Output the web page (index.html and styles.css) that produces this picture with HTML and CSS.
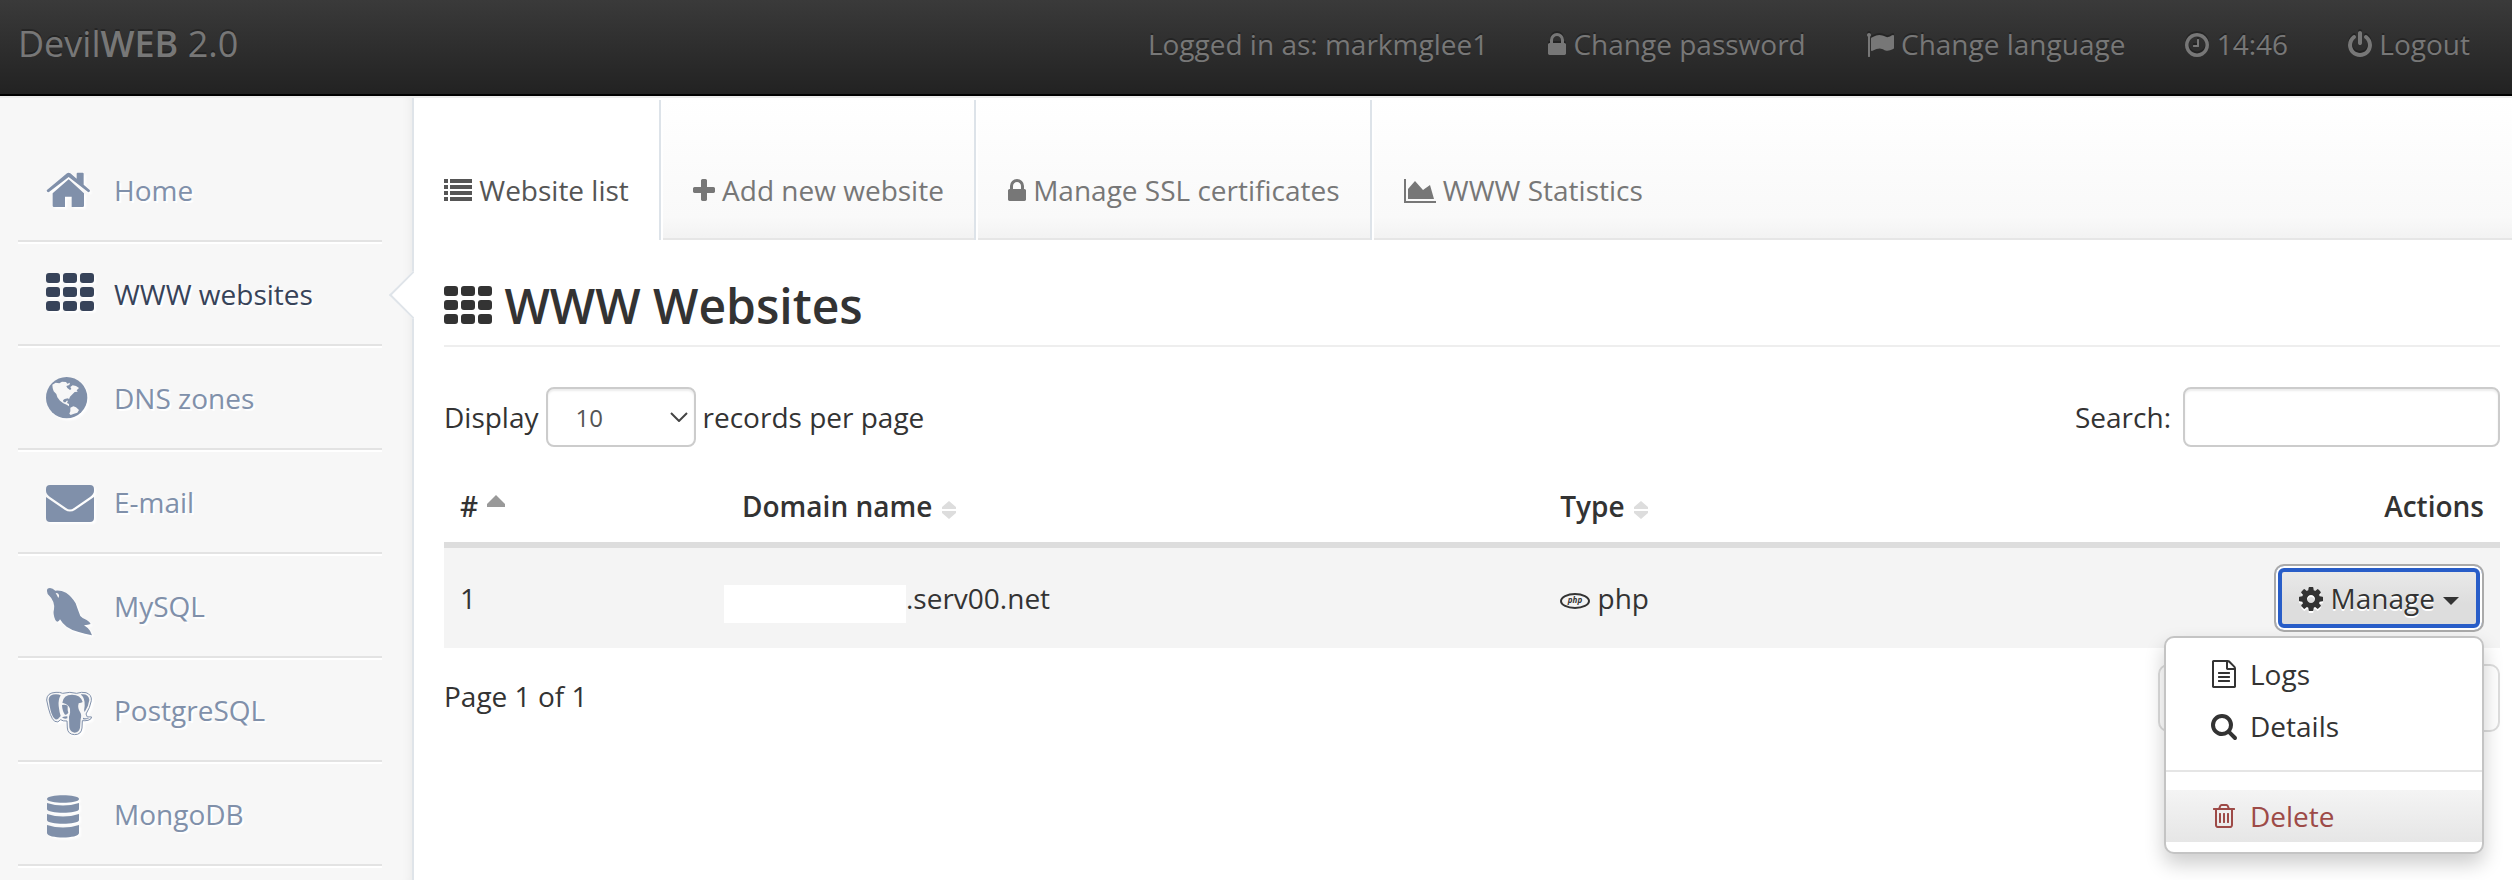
FILE: index.html
```html
<!DOCTYPE html>
<html lang="en">
<head>
    <meta charset="UTF-8">
    <meta name="viewport" content="width=device-width, initial-scale=1.0">
    <title>WWW Websites - DevilWEB</title>
    <link rel="stylesheet" href="styles.css">
</head>
<body>
    <header class="navbar">
        <a class="brand" href="#">Devil<strong>WEB</strong> 2.0</a>
        <ul class="navbar-menu">
            <li>Logged in as: markmglee1</li>
            <li><a href="#"><svg class="icon" viewBox="320 0 1152 1792"><path d="M640 768h512v-192q0-106-75-181t-181-75-181 75-75 181v192zm832 96v576q0 40-28 68t-68 28h-960q-40 0-68-28t-28-68v-576q0-40 28-68t68-28h32v-192q0-184 132-316t316-132 316 132 132 316v192h32q40 0 68 28t28 68z"/></svg> Change password</a></li>
            <li><a href="#"><svg class="icon" viewBox="0 0 1792 1792"><path d="M320 256q0 72-64 110v1266q0 13-9.500 22.500t-22.500 9.500h-64q-13 0-22.500-9.500t-9.500-22.500v-1266q-64-38-64-110 0-53 37.500-90.500t90.500-37.500 90.500 37.500 37.500 90.500zm1472 64v763q0 25-12.500 38.500t-39.500 27.500q-215 116-369 116-61 0-123.500-22t-108.500-48-115.500-48-142.500-22q-192 0-464 146-17 9-33 9-26 0-45-19t-19-45v-742q0-32 31-55 21-14 79-43 236-120 421-120 107 0 200 29t219 88q38 19 88 19 54 0 117.500-21t110-47 88-47 54.500-21q26 0 45 19t19 45z"/></svg> Change language</a></li>
            <li><a href="#"><svg class="icon" viewBox="128 0 1536 1792"><path d="M1024 544v448q0 14-9 23t-23 9h-320q-14 0-23-9t-9-23v-64q0-14 9-23t23-9h224v-352q0-14 9-23t23-9h64q14 0 23 9t9 23zm416 352q0-148-73-273t-198-198-273-73-273 73-198 198-73 273 73 273 198 198 273 73 273-73 198-198 73-273zm224 0q0 209-103 385.500t-279.500 279.500-385.500 103-385.500-103-279.500-279.500-103-385.500 103-385.500 279.500-279.500 385.500-103 385.500 103 279.500 279.500 103 385.500z"/></svg> 14:46</a></li>
            <li><a href="#"><svg class="icon" viewBox="128 0 1536 1792"><path d="M1664 896q0 156-61 298t-164 245-245 164-298 61-298-61-245-164-164-245-61-298q0-182 80.500-343t226.500-270q43-32 95.500-25t83.500 50q32 42 24.500 94.500t-49.500 84.500q-98 74-151.500 181t-53.500 228q0 104 40.500 198.500t109.500 163.500 163.500 109.500 198.500 40.500 198.500-40.500 163.500-109.500 109.500-163.500 40.500-198.500q0-121-53.500-228t-151.500-181q-42-32-49.500-84.500t24.500-94.500q31-43 84-50t95 25q146 109 226.500 270t80.500 343zm-640-768v640q0 52-38 90t-90 38-90-38-38-90v-640q0-52 38-90t90-38 90 38 38 90z"/></svg> Logout</a></li>
        </ul>
    </header>

    <div class="page">
        <nav class="sidebar">
            <ul>
                <li><a href="#">
                    <svg viewBox="18 18 144 144">
                        <path d="M20 91 81 40q5-4 10 0l19 16V41q0-3 3-3h15q3 0 3 3v33l19 17q0 6-5 6L86 51 26 97q-6 0-6-6z"/>
                        <path d="M38 100 86 58l46 42v37q0 4-4 4H95v-31H75v31H42q-4 0-4-4z"/>
                    </svg>
                    Home
                </a></li>
                <li class="active"><a href="#">
                    <svg viewBox="0 0 48 48">
                        <path d="M3 3h8a3 3 0 0 1 3 3v4a3 3 0 0 1-3 3h-8a3 3 0 0 1-3-3v-4a3 3 0 0 1 3-3zm17 0h8a3 3 0 0 1 3 3v4a3 3 0 0 1-3 3h-8a3 3 0 0 1-3-3v-4a3 3 0 0 1 3-3zm17 0h8a3 3 0 0 1 3 3v4a3 3 0 0 1-3 3h-8a3 3 0 0 1-3-3v-4a3 3 0 0 1 3-3zM3 17h8a3 3 0 0 1 3 3v4a3 3 0 0 1-3 3h-8a3 3 0 0 1-3-3v-4a3 3 0 0 1 3-3zm17 0h8a3 3 0 0 1 3 3v4a3 3 0 0 1-3 3h-8a3 3 0 0 1-3-3v-4a3 3 0 0 1 3-3zm17 0h8a3 3 0 0 1 3 3v4a3 3 0 0 1-3 3h-8a3 3 0 0 1-3-3v-4a3 3 0 0 1 3-3zM3 31h8a3 3 0 0 1 3 3v4a3 3 0 0 1-3 3h-8a3 3 0 0 1-3-3v-4a3 3 0 0 1 3-3zm17 0h8a3 3 0 0 1 3 3v4a3 3 0 0 1-3 3h-8a3 3 0 0 1-3-3v-4a3 3 0 0 1 3-3zm17 0h8a3 3 0 0 1 3 3v4a3 3 0 0 1-3 3h-8a3 3 0 0 1-3-3v-4a3 3 0 0 1 3-3z"/>
                    </svg>
                    WWW websites
                </a></li>
                <li><a href="#">
                    <svg viewBox="18 12 144 144">
                        <circle cx="80" cy="83" r="62"/>
                        <path class="land" d="M37 44L47 38 58 40 66 35 78 36 82 41 90 38 88 45 79 48 82 54 90 60 94 57 91 51 98 46 108 48 117 54 110 61 113 65 104 66 98 72 90 80 87 88 84 85 74 87 69 91 71 97 77 97 80 92 84 92 81 99 87 102 87 109 80 104 70 100 60 92 52 82 49 72 41 64 38 54z"/>
                        <path class="land" d="M91 113L100 109 108 112 117 120 112 128 102 131 92 135 88 131 91 124z"/>
                    </svg>
                    DNS zones
                </a></li>
                <li><a href="#">
                    <svg viewBox="0 0 48 48">
                        <path d="M4 7h40q4 0 4 4v2q0 3-4 6L28 30q-4 3-8 0L4 19q-4-3-4-6v-2q0-4 4-4z"/>
                        <path d="M0 19l19 13q5 3 10 0l19-13v21q0 4-4 4H4q-4 0-4-4z"/>
                    </svg>
                    E-mail
                </a></li>
                <li><a href="#">
                    <svg viewBox="18 6 144 144">
                        <path d="M21 34Q20 24 30 24 38 25 46 32 62 30 78 38 96 50 107 70 113 88 121 108 128 116 140 120 150 126 152 132 144 135 132 136 142 142 150 152L156 166Q134 162 116 156 94 150 80 140 68 132 60 118 58 122 55 124 51 128 46 120 38 102 42 88 44 78 40 66 34 52 23 42z"/>
                        <path class="land" d="M47 39q8-1 10 6 1 4-2 9-4-8-8-15z"/>
                    </svg>
                    MySQL
                </a></li>
                <li><a href="#">
                    <svg viewBox="18 318 144 144">
                        <path class="outline" d="M20 360Q20 338 48 337 60 336 68 340 90 334 110 340 125 335 138 338 156 344 154 362 150 384 138 402L142 411Q150 410 155 411 154 419 144 421 134 423 127 422L126 444Q124 464 104 464 83 463 82 444L81 423Q68 424 62 419 54 430 44 424 30 414 20 360z"/>
                        <path d="M26 358Q28 343 48 343 57 343 62 346 54 360 56 378 58 396 62 408 54 420 46 418 32 410 26 358z"/>
                        <path d="M67 368Q70 344 96 344 122 344 128 366 124 368 116 370 112 384 120 396 126 404 122 418L120 444Q116 458 104 458 90 456 88 442L87 410Q92 398 90 386 86 372 67 368z"/>
                        <path d="M66 375Q76 373 83 377 82 390 85 398 80 406 75 404 67 394 66 375z"/>
                        <path d="M122 343Q146 340 148 360 146 378 134 396 131 390 134 378 136 356 122 343z"/>
                        <path d="M66 412Q74 409 82 409L82 415Q72 418 66 412zM129 413Q138 417 150 413 142 420 129 418z"/>
                    </svg>
                    PostgreSQL
                </a></li>
                <li><a href="#">
                    <svg viewBox="0 0 48 48">
                        <path d="M1 9c0-5 32-5 32 0s-32 5-32 0zM1 13q16 5 32 0v6c0 5-32 5-32 0zM1 24q16 5 32 0v6c0 5-32 5-32 0zM1 35q16 5 32 0v8c0 6-32 6-32 0z"/>
                    </svg>
                    MongoDB
                </a></li>
            </ul>
        </nav>

        <main class="main">
            <nav class="tabs">
                <a class="active" href="#"><svg class="icon" viewBox="0 0 28 28"><path d="M0 2h4v4H0zM6 2h22v4H6zM0 8h4v4H0zM6 8h22v4H6zM0 14h4v4H0zM6 14h22v4H6zM0 20h4v4H0zM6 20h22v4H6z"/></svg> Website list</a>
                <a href="#"><svg class="icon" viewBox="192 0 1408 1792"><path d="M1600 736v192q0 40-28 68t-68 28h-416v416q0 40-28 68t-68 28h-192q-40 0-68-28t-28-68v-416h-416q-40 0-68-28t-28-68v-192q0-40 28-68t68-28h416v-416q0-40 28-68t68-28h192q40 0 68 28t28 68v416h416q40 0 68 28t28 68z"/></svg> Add new website</a>
                <a href="#"><svg class="icon" viewBox="320 0 1152 1792"><path d="M640 768h512v-192q0-106-75-181t-181-75-181 75-75 181v192zm832 96v576q0 40-28 68t-68 28h-960q-40 0-68-28t-28-68v-576q0-40 28-68t68-28h32v-192q0-184 132-316t316-132 316 132 132 316v192h32q40 0 68 28t28 68z"/></svg> Manage SSL certificates</a>
                <a href="#"><svg class="icon" viewBox="0 0 32 28"><path d="M0 2h2v22h30v2H0zM4 22V12l7-8 8 9 7-5 4 14z"/></svg> WWW Statistics</a>
            </nav>

            <div class="content">
                <h1>
                    <svg class="icon-heading" viewBox="0 0 48 38">
                        <path d="M3 0h8a3 3 0 0 1 3 3v4a3 3 0 0 1-3 3h-8a3 3 0 0 1-3-3v-4a3 3 0 0 1 3-3zm17 0h8a3 3 0 0 1 3 3v4a3 3 0 0 1-3 3h-8a3 3 0 0 1-3-3v-4a3 3 0 0 1 3-3zm17 0h8a3 3 0 0 1 3 3v4a3 3 0 0 1-3 3h-8a3 3 0 0 1-3-3v-4a3 3 0 0 1 3-3zM3 14h8a3 3 0 0 1 3 3v4a3 3 0 0 1-3 3h-8a3 3 0 0 1-3-3v-4a3 3 0 0 1 3-3zm17 0h8a3 3 0 0 1 3 3v4a3 3 0 0 1-3 3h-8a3 3 0 0 1-3-3v-4a3 3 0 0 1 3-3zm17 0h8a3 3 0 0 1 3 3v4a3 3 0 0 1-3 3h-8a3 3 0 0 1-3-3v-4a3 3 0 0 1 3-3zM3 28h8a3 3 0 0 1 3 3v4a3 3 0 0 1-3 3h-8a3 3 0 0 1-3-3v-4a3 3 0 0 1 3-3zm17 0h8a3 3 0 0 1 3 3v4a3 3 0 0 1-3 3h-8a3 3 0 0 1-3-3v-4a3 3 0 0 1 3-3zm17 0h8a3 3 0 0 1 3 3v4a3 3 0 0 1-3 3h-8a3 3 0 0 1-3-3v-4a3 3 0 0 1 3-3z"/>
                    </svg>
                    WWW Websites
                </h1>

                <div class="table-controls">
                    <label class="length">
                        Display
                        <span class="select">
                            <select>
                                <option>10</option>
                                <option>25</option>
                                <option>50</option>
                            </select>
                            <svg viewBox="0 0 18 10"><path d="M1 1l8 8 8-8"/></svg>
                        </span>
                        records per page
                    </label>
                    <label class="search">Search: <input type="text"></label>
                </div>

                <table>
                    <thead>
                        <tr>
                            <th class="col-id"># <svg class="sort-asc" viewBox="0 0 18 12"><path d="M9 0l9 9v3H0V9z"/></svg></th>
                            <th class="col-domain">Domain name <svg class="sort" viewBox="0 0 14 18"><path d="M7 0l7 6v2H0V6zM0 10h14v2l-7 6-7-6z"/></svg></th>
                            <th>Type <svg class="sort" viewBox="0 0 14 18"><path d="M7 0l7 6v2H0V6zM0 10h14v2l-7 6-7-6z"/></svg></th>
                            <th class="actions">Actions</th>
                        </tr>
                    </thead>
                    <tbody>
                        <tr>
                            <td>1</td>
                            <td><span class="hidden-name"></span>.serv00.net</td>
                            <td>
                                <svg class="icon-php" viewBox="0 0 30 16">
                                    <ellipse cx="15" cy="8" rx="14" ry="7"/>
                                    <text x="15" y="10" text-anchor="middle">php</text>
                                </svg>
                                php
                            </td>
                            <td class="actions">
                                <div class="dropdown">
                                    <button class="btn" type="button"><svg class="icon" viewBox="128 0 1536 1792"><path d="M1152 896q0-106-75-181t-181-75-181 75-75 181 75 181 181 75 181-75 75-181zm512-109v222q0 12-8 23t-20 13l-185 28q-19 54-39 91 35 50 107 138 10 12 10 25t-9 23q-27 37-99 108t-94 71q-12 0-26-9l-138-108q-44 23-91 38-16 136-29 186-7 28-36 28h-222q-14 0-24.500-8.500t-11.500-21.500l-28-184q-49-16-90-37l-141 107q-10 9-25 9-14 0-25-11-126-114-165-168-7-10-7-23 0-12 8-23 15-21 51-66.500t54-70.500q-27-50-41-99l-183-27q-13-2-21-12.500t-8-23.500v-222q0-12 8-23t19-13l186-28q14-46 39-92-40-57-107-138-10-12-10-24 0-10 9-23 26-36 98.500-107.500t94.500-71.500q13 0 26 10l138 107q44-23 91-38 16-136 29-186 7-28 36-28h222q14 0 24.500 8.500t11.500 21.500l28 184q49 16 90 37l142-107q9-9 24-9 13 0 25 10 129 119 165 170 7 8 7 22 0 12-8 23-15 21-51 66.500t-54 70.500q26 50 41 98l183 28q13 2 21 12.500t8 23.500z"/></svg> Manage<span class="caret"></span></button>
                                    <ul class="dropdown-menu">
                                        <li><a href="#"><svg class="icon" viewBox="128 0 1536 1792"><path d="M1596 380q28 28 48 76t20 88v1152q0 40-28 68t-68 28h-1344q-40 0-68-28t-28-68v-1600q0-40 28-68t68-28h896q40 0 88 20t76 48zm-444-244v376h376q-10-29-22-41l-313-313q-12-12-41-22zm384 1528v-1024h-416q-40 0-68-28t-28-68v-416h-768v1536h1280zm-1024-864q0-14 9-23t23-9h704q14 0 23 9t9 23v64q0 14-9 23t-23 9h-704q-14 0-23-9t-9-23v-64zm736 224q14 0 23 9t9 23v64q0 14-9 23t-23 9h-704q-14 0-23-9t-9-23v-64q0-14 9-23t23-9h704zm0 256q14 0 23 9t9 23v64q0 14-9 23t-23 9h-704q-14 0-23-9t-9-23v-64q0-14 9-23t23-9h704z"/></svg> Logs</a></li>
                                        <li><a href="#"><svg class="icon" viewBox="64 0 1664 1792"><path d="M1216 832q0-185-131.500-316.500t-316.500-131.500-316.500 131.500-131.500 316.500 131.500 316.500 316.500 131.500 316.500-131.500 131.500-316.500zm512 832q0 52-38 90t-90 38q-54 0-90-38l-343-342q-179 124-399 124-143 0-273.500-55.500t-225-150-150-225-55.500-273.500 55.500-273.500 150-225 225-150 273.500-55.500 273.500 55.500 225 150 150 225 55.500 273.500q0 220-124 399l343 343q37 37 37 90z"/></svg> Details</a></li>
                                        <li class="divider"></li>
                                        <li class="delete"><a href="#"><svg class="icon" viewBox="192 0 1408 1792"><path d="M704 736v576q0 14-9 23t-23 9h-64q-14 0-23-9t-9-23v-576q0-14 9-23t23-9h64q14 0 23 9t9 23zm256 0v576q0 14-9 23t-23 9h-64q-14 0-23-9t-9-23v-576q0-14 9-23t23-9h64q14 0 23 9t9 23zm256 0v576q0 14-9 23t-23 9h-64q-14 0-23-9t-9-23v-576q0-14 9-23t23-9h64q14 0 23 9t9 23zm128 724v-948h-896v948q0 22 7 40.500t14.500 27 10.500 8.500h832q3 0 10.500-8.500t14.500-27 7-40.500zm-672-1076h448l-48-117q-7-9-17-11h-317q-10 2-17 11zm928 32v64q0 14-9 23t-23 9h-96v948q0 83-47 143.500t-113 60.500h-832q-66 0-113-58.500t-47-141.500v-952h-96q-14 0-23-9t-9-23v-64q0-14 9-23t23-9h309l70-167q15-37 54-63t79-26h320q40 0 79 26t54 63l70 167h309q14 0 23 9t9 23z"/></svg> Delete</a></li>
                                    </ul>
                                </div>
                            </td>
                        </tr>
                    </tbody>
                </table>

                <div class="table-footer">
                    <p>Page 1 of 1</p>
                    <div class="pagination"></div>
                </div>
            </div>
        </main>
    </div>
</body>
</html>
```

FILE: styles.css
```css
* {
    box-sizing: border-box;
}

body {
    margin: 0;
    min-height: 100vh;
    display: flex;
    flex-direction: column;
    background: #fff;
    color: #333;
    font-family: "Open Sans", "Noto Sans", sans-serif;
    font-size: 28px;
    line-height: 40px;
}

a {
    color: inherit;
    text-decoration: none;
}

ul {
    list-style: none;
    margin: 0;
    padding: 0;
}

.icon {
    height: 28px;
    vertical-align: -4px;
    fill: currentColor;
}

/* Top bar */
.navbar {
    display: flex;
    justify-content: space-between;
    align-items: flex-start;
    height: 96px;
    padding: 24px 42px 0 18px;
    background: linear-gradient(#3a3a3a, #222);
    border-bottom: 2px solid #000;
    color: #777;
    text-shadow: 0 -2px 0 rgba(0,0,0,0.25);
}

.navbar .icon {
    filter: drop-shadow(0 -2px 0 rgba(0,0,0,0.25));
}

.brand {
    font-size: 36px;
}

.brand strong {
    font-weight: 600;
}

.navbar-menu {
    display: flex;
    gap: 60px;
}

.page {
    flex: 1;
    display: flex;
    border-top: 2px solid #ececec;
}

/* Sidebar */
.sidebar {
    flex: none;
    width: 414px;
    padding: 42px 30px 0 18px;
    background: #f7f7f7;
    border-right: 2px solid #dfe4e9;
    box-shadow: inset -10px 0 10px -8px rgba(0,0,0,0.05);
}

.sidebar li {
    position: relative;
    border-bottom: 2px solid #e3e3e3;
    box-shadow: 0 2px 0 #fff;
    margin-bottom: 2px;
}

.sidebar a {
    display: flex;
    align-items: center;
    gap: 20px;
    height: 100px;
    padding-left: 28px;
    color: #8090aa;
    text-shadow: 2px 2px 1px #fff;
}

.sidebar svg {
    width: 48px;
    height: 48px;
    overflow: visible;
    fill: currentColor;
    filter: drop-shadow(2px 2px 1px #fff);
}

.sidebar .land {
    fill: #f7f7f7;
}

.sidebar .outline {
    fill: #f7f7f7;
    stroke: currentColor;
    stroke-width: 3;
}

.sidebar .active a {
    color: #374359;
}

/* Notch pointing from the page to the current section */
.sidebar .active::after {
    content: "";
    position: absolute;
    top: 34px;
    right: -48px;
    width: 32px;
    height: 32px;
    background: #fff;
    border-left: 2px solid #dfe4e9;
    border-bottom: 2px solid #dfe4e9;
    transform: rotate(45deg);
}

/* Tabs */
.main {
    flex: 1;
    min-width: 0;
    position: relative;
    background: #fff;
}

.tabs {
    display: flex;
    padding-top: 2px;
    background: linear-gradient(#fff, #f9f9f9 84%, #f2f2f2);
    box-shadow: inset 0 -2px 0 #e6e6e6;
}

.tabs a {
    padding: 70px 30px 30px;
    color: #777;
    border-right: 2px solid #dde3e9;
    border-left: 2px solid #fff;
}

.tabs a:last-child {
    border-right: 0;
}

.tabs .active {
    background: #fff;
    color: #555;
    border-left: 0;
}

/* Content */
.content {
    padding: 27px 12px 0 30px;
}

h1 {
    margin: 0 0 40px;
    border-bottom: 2px solid #eee;
    font-size: 48px;
    font-weight: 600;
    line-height: 78px;
}

.icon-heading {
    width: 48px;
    height: 38px;
    fill: currentColor;
}

.table-controls {
    display: flex;
    justify-content: space-between;
    margin-bottom: 23px;
}

.length,
.search {
    display: flex;
    align-items: center;
    gap: 7px;
}

.search {
    gap: 12px;
}

.select {
    position: relative;
    display: flex;
}

select,
input {
    height: 60px;
    border: 2px solid #ccc;
    border-radius: 8px;
    background: #fff;
    box-shadow: inset 0 2px 2px rgba(0,0,0,0.075);
    color: #555;
    font-family: inherit;
    font-size: 24px;
}

select {
    appearance: none;
    width: 150px;
    padding: 0 28px;
}

.select svg {
    position: absolute;
    top: 25px;
    right: 8px;
    width: 18px;
    height: 10px;
    fill: none;
    stroke: #444;
    stroke-width: 2;
    pointer-events: none;
}

input {
    width: 317px;
    padding: 0 12px;
}

table {
    width: 100%;
    table-layout: fixed;
    border-collapse: collapse;
}

th,
td {
    padding: 16px;
    text-align: left;
    vertical-align: middle;
}

th {
    font-weight: 600;
    border-bottom: 6px solid #ddd;
}

td {
    background: #f4f4f4;
}

.col-id {
    width: 282px;
}

.col-domain {
    width: 39.8%;
}

.actions {
    text-align: right;
}

.sort {
    height: 18px;
    margin-left: 2px;
    fill: #ddd;
    vertical-align: -2px;
}

.sort-asc {
    height: 12px;
    margin-left: 2px;
    fill: #999;
    vertical-align: 10px;
}

.hidden-name {
    display: inline-block;
    width: 182px;
    height: 38px;
    margin: 0 0 -14px -18px;
    background: #fff;
}

.icon-php {
    width: 30px;
    height: 16px;
    fill: none;
    stroke: #333;
    stroke-width: 2;
}

.icon-php text {
    fill: #333;
    stroke: none;
    font-size: 8px;
    font-style: italic;
    font-weight: 700;
}

/* Manage button and its menu */
.dropdown {
    position: relative;
    display: flex;
    justify-content: flex-end;
}

.btn {
    height: 68px;
    padding: 0 23px;
    border: 2px solid #aaa;
    border-radius: 10px;
    background: linear-gradient(#ebebeb, #ddd 60%);
    box-shadow: inset 0 0 0 2px #fff, inset 0 0 0 6px #285dc8;
    color: #333;
    font-family: inherit;
    font-size: 28px;
    line-height: 40px;
    text-shadow: 0 2px 0 #fff;
}

.btn .icon {
    filter: drop-shadow(0 2px 0 #fff);
}

.caret {
    display: inline-block;
    margin-left: 8px;
    vertical-align: 4px;
    border-top: 8px solid #333;
    border-left: 8px solid transparent;
    border-right: 8px solid transparent;
}

.dropdown-menu {
    position: absolute;
    z-index: 10;
    top: 100%;
    right: 0;
    width: 320px;
    margin-top: 4px;
    padding: 10px 0;
    background: #fff;
    border: 2px solid #c4c4c4;
    border-radius: 10px;
    box-shadow: 0 10px 20px rgba(0,0,0,0.2);
    text-align: left;
}

.dropdown-menu a {
    display: flex;
    align-items: center;
    gap: 8px;
    padding: 6px 40px;
}

.dropdown-menu .icon {
    width: 36px;
}

.divider {
    height: 2px;
    margin: 18px 0;
    background: #e5e5e5;
}

.delete {
    background: linear-gradient(#f4f4f4, #e6e6e6);
    color: #9d4a47;
}

.table-footer {
    display: flex;
    justify-content: space-between;
    padding-top: 16px;
}

.table-footer p {
    margin: 0;
    padding-top: 12px;
}

.pagination {
    width: 342px;
    height: 68px;
    border: 2px solid #ddd;
    border-radius: 10px;
}
```
